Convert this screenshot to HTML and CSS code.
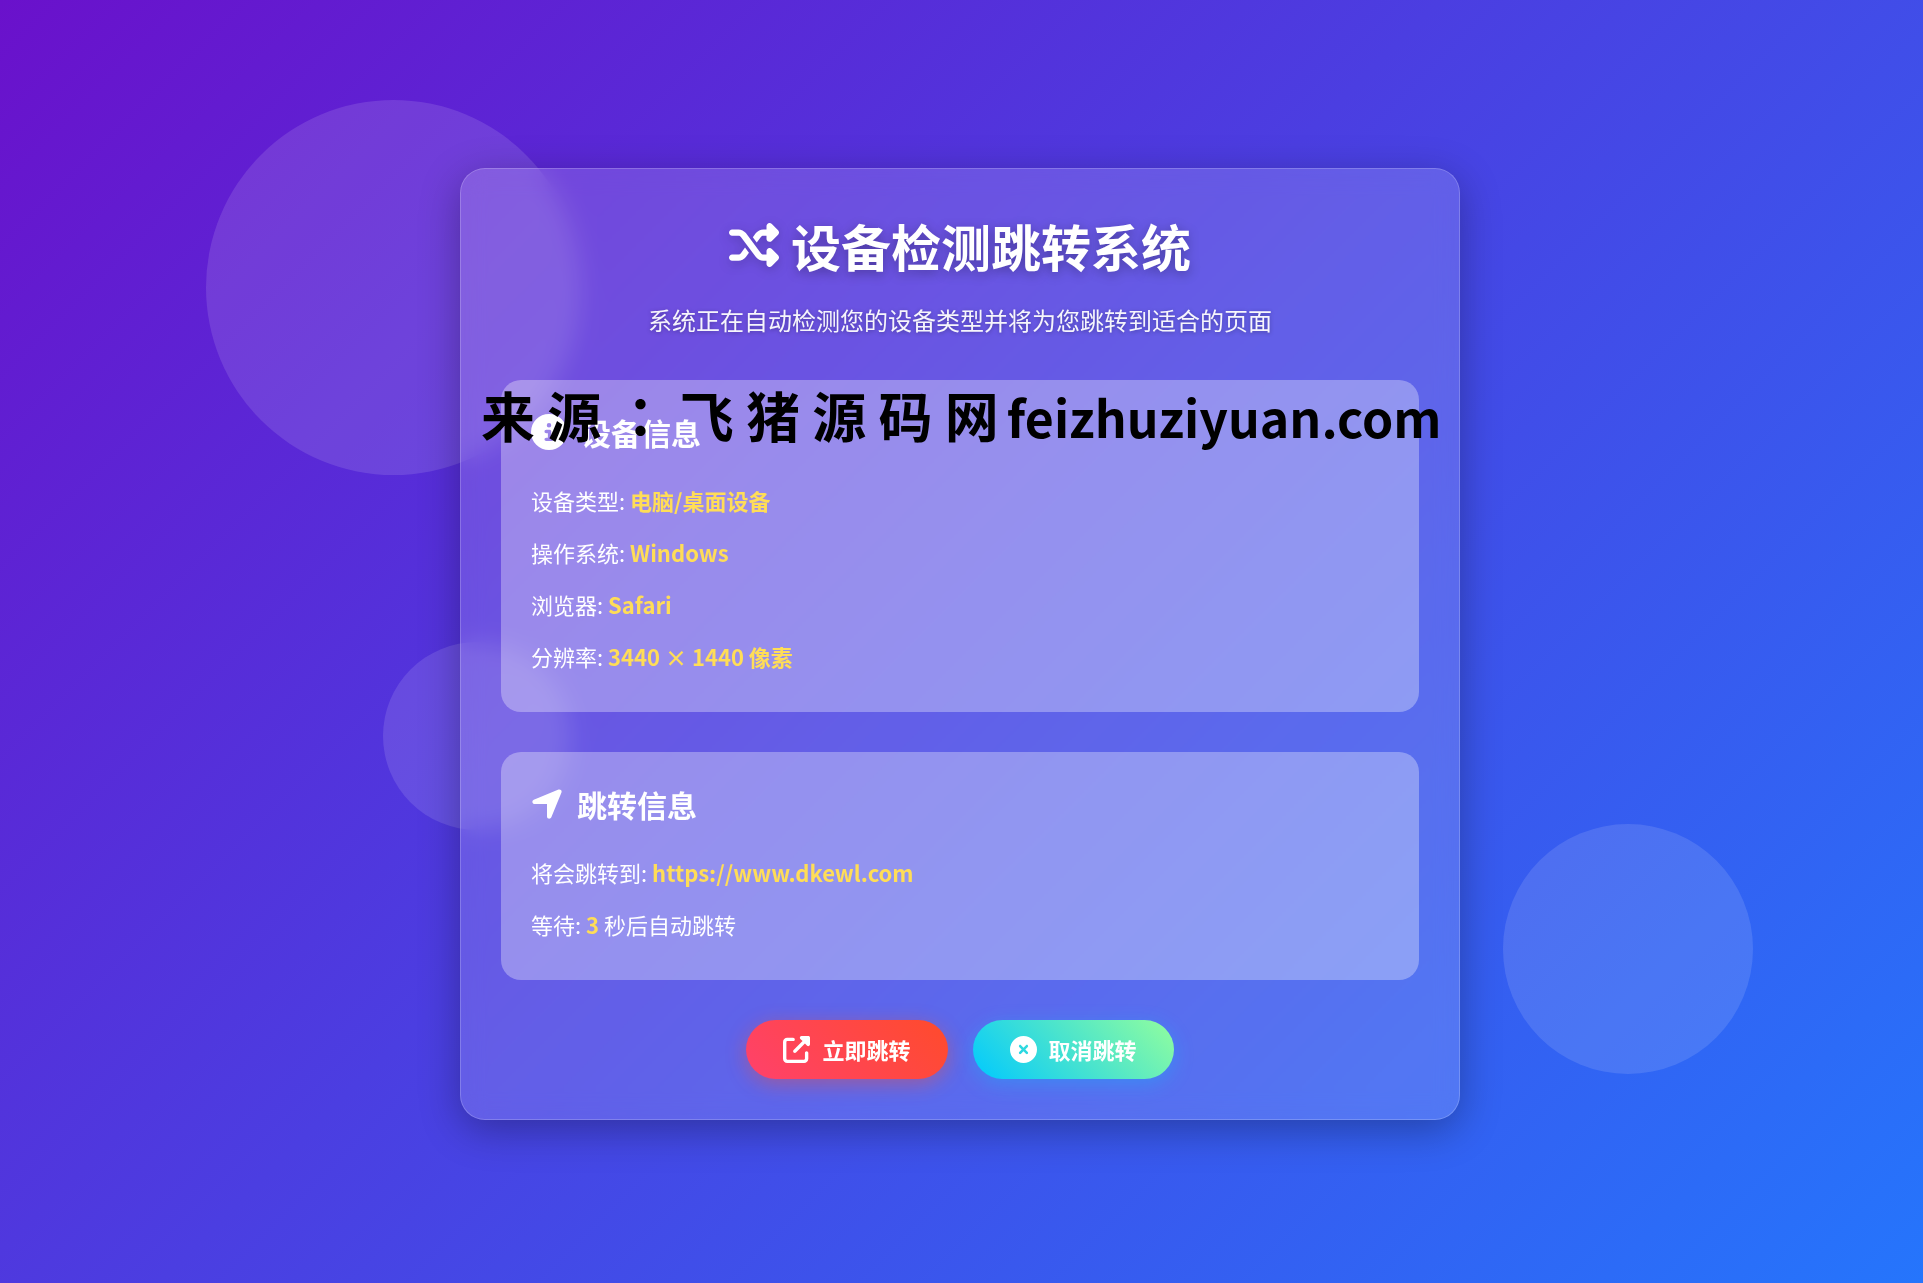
FILE: index.html
```html
<!DOCTYPE html>
<html lang="zh-CN">
  <head>
    <meta charset="utf-8" />
    <meta name="viewport" content="width=device-width, initial-scale=1" />
    <title>设备检测跳转系统</title>
    <link rel="stylesheet" href="styles.css">
  </head>
  <body>
    <div class="circle circle-1"></div>
    <div class="circle circle-2"></div>
    <div class="circle circle-3"></div>

    <main class="container">
      <h1>
        <svg class="icon" viewBox="0 0 512 512" aria-hidden="true">
          <path d="M403.8 34.4c12-5 25.7-2.2 34.9 6.9l64 64c6 6 9.4 14.1 9.4 22.6s-3.4 16.6-9.4 22.6l-64 64c-9.2 9.2-22.9 11.9-34.9 6.9s-19.8-16.6-19.8-29.6V160H352c-10.1 0-19.6 4.7-25.6 12.8L284 229.3 244 176l31.2-41.6C293.3 110.2 321.8 96 352 96h32V64c0-12.9 7.8-24.6 19.8-29.6zM164 282.7L204 336l-31.2 41.6C154.7 401.8 126.2 416 96 416H32c-17.7 0-32-14.3-32-32s14.3-32 32-32H96c10.1 0 19.6-4.7 25.6-12.8L164 282.7zm274.6 188c-9.2 9.2-22.9 11.9-34.9 6.9s-19.8-16.6-19.8-29.6V416H352c-30.2 0-58.7-14.2-76.8-38.4L121.6 172.8c-6-8.1-15.5-12.8-25.6-12.8H32c-17.7 0-32-14.3-32-32s14.3-32 32-32H96c30.2 0 58.7 14.2 76.8 38.4L326.4 339.2c6 8.1 15.5 12.8 25.6 12.8h32V320c0-12.9 7.8-24.6 19.8-29.6s25.7-2.2 34.9 6.9l64 64c6 6 9.4 14.1 9.4 22.6s-3.4 16.6-9.4 22.6l-64 64z" />
        </svg>
        设备检测跳转系统
      </h1>
      <p class="subtitle">系统正在自动检测您的设备类型并将为您跳转到适合的页面</p>

      <section class="panel">
        <h2>
          <svg class="icon" viewBox="0 0 512 512" aria-hidden="true">
            <path d="M256 512A256 256 0 1 0 256 0a256 256 0 1 0 0 512zM216 336h24V272H216c-13.3 0-24-10.7-24-24s10.7-24 24-24h48c13.3 0 24 10.7 24 24v88h8c13.3 0 24 10.7 24 24s-10.7 24-24 24H216c-13.3 0-24-10.7-24-24s10.7-24 24-24zm40-208a32 32 0 1 1 0 64 32 32 0 1 1 0-64z" />
          </svg>
          设备信息
        </h2>
        <p>设备类型: <span class="highlight">电脑/桌面设备</span></p>
        <p>操作系统: <span class="highlight">Windows</span></p>
        <p>浏览器: <span class="highlight">Safari</span></p>
        <p>分辨率: <span class="highlight">3440 × 1440 像素</span></p>
      </section>

      <section class="panel">
        <h2>
          <svg class="icon icon-narrow" viewBox="0 0 448 512" aria-hidden="true">
            <path d="M429.6 92.1c4.9-11.9 2.1-25.6-7-34.7s-22.8-11.9-34.7-7l-352 144c-14.2 5.8-22.2 20.8-19.3 35.8s16.1 25.8 31.4 25.8H224V432c0 15.3 10.8 28.4 25.8 31.4s30-5.1 35.8-19.3l144-352z" />
          </svg>
          跳转信息
        </h2>
        <p>将会跳转到: <span class="highlight">https://www.dkewl.com</span></p>
        <p>等待: <span class="highlight">3</span> 秒后自动跳转</p>
      </section>

      <div class="buttons">
        <button type="button" class="btn btn-go">
          <svg class="icon" viewBox="0 0 512 512" aria-hidden="true">
            <path d="M352 0c-12.9 0-24.6 7.8-29.6 19.8s-2.2 25.7 6.9 34.9L370.7 96 201.4 265.4c-12.5 12.5-12.5 32.8 0 45.3s32.8 12.5 45.3 0L416 141.3l41.4 41.4c9.2 9.2 22.9 11.9 34.9 6.9s19.8-16.6 19.8-29.6V32c0-17.7-14.3-32-32-32H352zM80 32C35.8 32 0 67.8 0 112V432c0 44.2 35.8 80 80 80H400c44.2 0 80-35.8 80-80V320c0-17.7-14.3-32-32-32s-32 14.3-32 32V432c0 8.8-7.2 16-16 16H80c-8.8 0-16-7.2-16-16V112c0-8.8 7.2-16 16-16H192c17.7 0 32-14.3 32-32s-14.3-32-32-32H80z" />
          </svg>
          立即跳转
        </button>
        <button type="button" class="btn btn-cancel">
          <svg class="icon" viewBox="0 0 512 512" aria-hidden="true">
            <path d="M256 512A256 256 0 1 0 256 0a256 256 0 1 0 0 512zM175 175c9.4-9.4 24.6-9.4 33.9 0l47 47 47-47c9.4-9.4 24.6-9.4 33.9 0s9.4 24.6 0 33.9l-47 47 47 47c9.4 9.4 9.4 24.6 0 33.9s-24.6 9.4-33.9 0l-47-47-47 47c-9.4 9.4-24.6 9.4-33.9 0s-9.4-24.6 0-33.9l47-47-47-47c-9.4-9.4-9.4-24.6 0-33.9z" />
          </svg>
          取消跳转
        </button>
      </div>

      <div class="watermark">来 源 <span class="watermark-colon" lang="zh-TW">：</span> 飞 猪 源 码 网<span class="watermark-site">feizhuziyuan.com</span></div>
    </main>
  </body>
</html>
```

FILE: styles.css
```css
* {
  margin: 0;
  padding: 0;
  box-sizing: border-box;
}

body {
  min-height: 100vh;
  padding: 29px 27px 24px 24px;
  display: flex;
  align-items: center;
  justify-content: center;
  position: relative;
  overflow-x: hidden;
  background: linear-gradient(135deg, #6a11cb 0%, #2575fc 100%);
  color: #fff;
  font-family: "Noto Sans CJK SC", sans-serif;
}

/* floating background circles */
.circle {
  position: absolute;
  border-radius: 50%;
  background: rgba(255, 255, 255, 0.12);
}

.circle-1 {
  width: 375px;
  height: 375px;
  top: 100px;
  left: 206px;
}

.circle-2 {
  width: 250px;
  height: 250px;
  right: 170px;
  bottom: 209px;
}

.circle-3 {
  width: 188px;
  height: 188px;
  top: 50%;
  left: 383px;
}

.container {
  position: relative;
  width: 100%;
  max-width: 1000px;
  padding: 40px;
  text-align: center;
  background: rgba(255, 255, 255, 0.15);
  border: 1px solid rgba(255, 255, 255, 0.2);
  border-radius: 25px;
  box-shadow: 0 10px 40px rgba(0, 0, 0, 0.3);
  backdrop-filter: blur(12px);
}

.icon {
  flex: none;
  width: 36px;
  height: 36px;
  fill: currentColor;
}

h1 {
  display: flex;
  align-items: center;
  justify-content: center;
  gap: 12px;
  margin-bottom: 19px;
  font-size: 50px;
  line-height: 72px;
  text-shadow: 0 3px 12px rgba(0, 0, 0, 0.3);
}

h1 .icon {
  width: 50px;
  height: 50px;
  filter: drop-shadow(0 3px 6px rgba(0, 0, 0, 0.2));
}

.subtitle {
  margin-bottom: 40px;
  font-size: 24px;
  line-height: 40px;
  color: rgba(255, 255, 255, 0.95);
  text-shadow: 0 1px 4px rgba(0, 0, 0, 0.3);
}

.panel {
  margin-bottom: 40px;
  padding: 28px 30px 30px;
  text-align: left;
  background: rgba(255, 255, 255, 0.32);
  border-radius: 20px;
}

.panel h2 {
  display: flex;
  align-items: center;
  gap: 14px;
  margin-bottom: 18px;
  font-size: 30px;
  line-height: 48px;
}

.panel .icon-narrow {
  width: 32px;
}

.panel p {
  padding: 8px 0;
  font-size: 22px;
  line-height: 36px;
}

.highlight {
  font-weight: bold;
  color: #ffdd57;
}

.buttons {
  display: flex;
  flex-wrap: wrap;
  justify-content: center;
  gap: 25px;
}

.btn {
  display: flex;
  align-items: center;
  gap: 12px;
  padding: 12px 37px;
  border: none;
  border-radius: 60px;
  color: #fff;
  font-family: inherit;
  font-size: 22px;
  font-weight: bold;
  line-height: 35px;
  cursor: pointer;
}

.btn .icon {
  width: 27px;
  height: 27px;
}

.btn-go {
  background: linear-gradient(45deg, #ff416c, #ff4b2b);
  box-shadow: 0 5px 20px rgba(255, 75, 43, 0.4);
}

.btn-cancel {
  background: linear-gradient(45deg, #00c9ff, #92fe9d);
  box-shadow: 0 5px 20px rgba(0, 201, 255, 0.3);
}

.watermark {
  position: absolute;
  top: 206px;
  left: 20px;
  color: #000;
  font-size: 54px;
  font-weight: bold;
  line-height: 80px;
  white-space: nowrap;
  pointer-events: none;
}

/* the TC face centres the full-width colon in its box */
.watermark-colon {
  font-family: "Noto Sans CJK TC", sans-serif;
}

.watermark-site {
  margin-left: 8px;
  font-size: 50px;
}
```
